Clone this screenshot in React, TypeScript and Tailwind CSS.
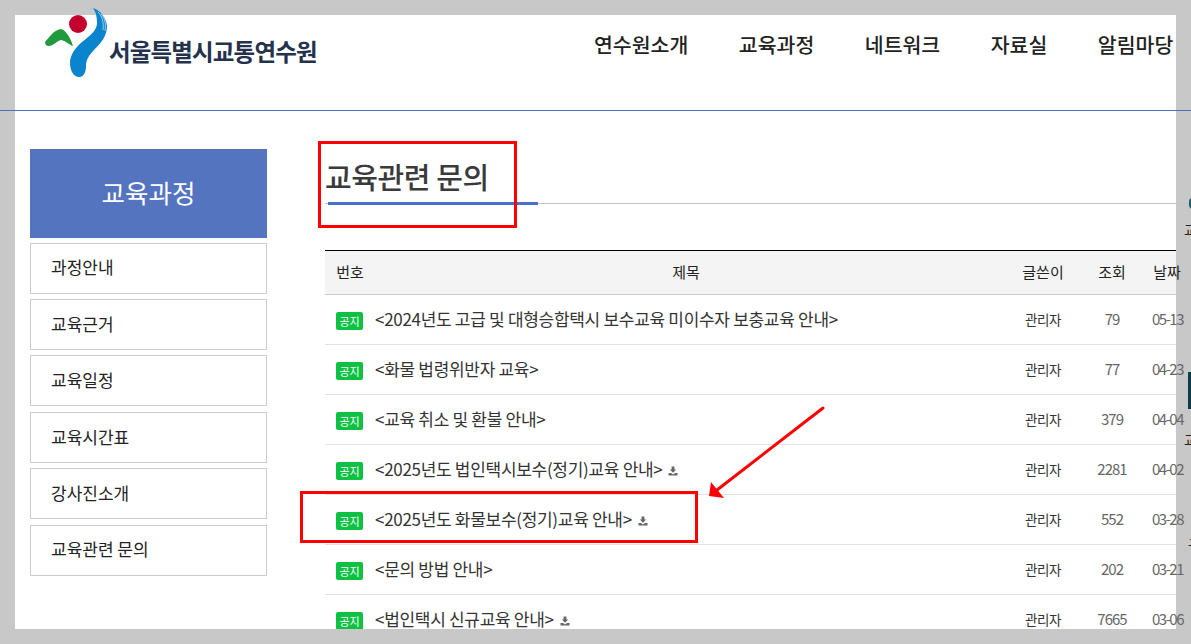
const menus = ["연수원소개", "교육과정", "네트워크", "자료실", "알림마당"];
const sideItems = ["과정안내", "교육근거", "교육일정", "교육시간표", "강사진소개", "교육관련 문의"];

const posts = [
  { title: "<2024년도 고급 및 대형승합택시 보수교육 미이수자 보충교육 안내>", views: 79, date: "05-13", file: false },
  { title: "<화물 법령위반자 교육>", views: 77, date: "04-23", file: false },
  { title: "<교육 취소 및 환불 안내>", views: 379, date: "04-04", file: false },
  { title: "<2025년도 법인택시보수(정기)교육 안내>", views: 2281, date: "04-02", file: true },
  { title: "<2025년도 화물보수(정기)교육 안내>", views: 552, date: "03-28", file: true },
  { title: "<문의 방법 안내>", views: 202, date: "03-21", file: false },
  { title: "<법인택시 신규교육 안내>", views: 7665, date: "03-06", file: true },
];

function Logo() {
  return (
    <svg width="66" height="72" viewBox="42 7 66 72" className="shrink-0">
      <circle cx="77" cy="24" r="9" fill="#c4002f" />
      <path d="M44 42 C48 38 52 30 60 29 C65 30 70 39 72 46 C67 44 63 40 60 40 C56 41 52 46 48 46 C45 46 44 44 44 42Z" fill="#1f9a3c" />
      <path d="M92 8 C99 10 105 17 106 26 C106 36 100 43 93 50 C88 55 85 60 85 66 C85 72 83 77 78 77 C73 77 69 71 69 63 C69 55 74 48 81 42 C90 35 96 30 96 23 C96 17 95 12 92 8Z" fill="#0a84cc" />
      <path d="M97 12 C101 16 103 22 102 30 M100 14 C104 18 105 24 104 31" fill="none" stroke="#ffffff" strokeWidth="0.6" />
    </svg>
  );
}

function DownloadIcon() {
  return (
    <svg width="10" height="10" viewBox="0 0 10 10" className="mt-[4px] ml-[6px] shrink-0">
      <path d="M3.6 0.5 H6.4 V3.5 H8.2 L5 6.8 L1.8 3.5 H3.6Z" fill="#666666" />
      <path d="M0.5 7 H3 L5 8.6 L7 7 H9.5 V9.5 H0.5Z" fill="#666666" />
    </svg>
  );
}

function App() {
  return (
    <div className="relative h-[644px] w-[1191px] overflow-hidden bg-[#c8c8c8] font-['Noto_Sans_CJK_KR',sans-serif]">
      {/* white sheet behind the page */}
      <div className="absolute left-[15px] top-[15px] h-[614px] w-[1161px] bg-white"></div>

      <header className="relative flex h-[111px] border-b border-[#4a6fc0] pl-[43px] pt-[7px]">
        <Logo />
        <strong className="mt-[26px] h-[36px] text-[23.5px] leading-[36px] font-bold tracking-[-0.85px] whitespace-nowrap text-[#25324d]">
          서울특별시교통연수원
        </strong>
        <nav className="absolute left-[594px] top-[28px] flex gap-[50.5px] text-[20.5px] leading-[32px] font-medium text-[#222]">
          {menus.map((menu) => (
            <a key={menu} className="whitespace-nowrap">
              {menu}
            </a>
          ))}
        </nav>
      </header>

      <div className="relative flex h-[518px] overflow-hidden pl-[30px] pt-[38px]">
        <aside className="w-[237px] shrink-0">
          <div className="flex h-[89px] items-center justify-center bg-[#5574c0] pb-[2px] text-[25.5px] text-white">
            교육과정
          </div>
          <ul className="mt-[4.6px] flex flex-col gap-[5.4px]">
            {sideItems.map((item) => (
              <li
                key={item}
                className="flex h-[51px] items-center border border-[#ccc] pb-[2px] pl-[20px] text-[17px] text-[#222]"
              >
                {item}
              </li>
            ))}
          </ul>
        </aside>

        <main className="ml-[58px] w-[851px] shrink-0">
          <div className="relative h-[55px] border-b border-[#c4c4c4] w-[866px]">
            <h2 className="pt-[6px] text-[29px] leading-[42px] font-medium tracking-[-0.4px] text-[#3a3a3a]">
              교육관련 문의
            </h2>
            <div className="absolute bottom-[-2px] left-[3px] h-[3px] w-[210px] bg-[#4a6fcf]"></div>
          </div>

          <div className="mt-[46px] border-t border-black">
            <div className="grid h-[44px] grid-cols-[50px_622px_92px_46px_64px] items-center border-b border-[#ccc] bg-[#f4f4f4] pb-[1px] text-center text-[15px] text-[#222]">
              <span>번호</span>
              <span>제목</span>
              <span>글쓴이</span>
              <span>조회</span>
              <span>날짜</span>
            </div>
            {posts.map((post) => (
              <div
                key={post.date}
                className="grid h-[50px] grid-cols-[50px_622px_92px_46px_64px] items-center border-b border-[#e2e2e2] text-center"
              >
                <span className="mt-[3px] ml-[11px] flex h-[18px] w-[27px] items-center justify-center rounded-[2px] bg-[#0dc143] text-[11px] text-white">
                  공지
                </span>
                <div className="flex items-center pb-[2px] text-left text-[17px] tracking-[-0.3px] whitespace-nowrap text-[#333]">
                  {post.title}
                  {post.file && <DownloadIcon />}
                </div>
                <span className="pb-[1px] text-[13.5px] tracking-[-0.4px] text-[#333]">관리자</span>
                <span className="pb-[1px] text-[15px] tracking-[-1px] text-[#666]">{post.views}</span>
                <span className="pb-[1px] pl-[1px] text-[15px] tracking-[-1.5px] text-[#666]">{post.date}</span>
              </div>
            ))}
          </div>
        </main>
      </div>

      {/* edge of the next window, cut off by the screenshot */}
      <div className="absolute left-[1189px] top-[198px] h-[11px] w-[4px] rounded-l-full bg-[#1d5a6e]"></div>
      <span className="absolute left-[1184px] top-[219px] text-[14px] leading-[20px] text-[#222]">교</span>
      <div className="absolute left-[1188px] top-[372px] h-[37px] w-[3px] bg-[#0d3b4c]"></div>
      <span className="absolute left-[1184px] top-[429px] text-[14px] leading-[20px] text-[#222]">교</span>
      <span className="absolute left-[1188px] top-[534px] text-[14px] leading-[20px] text-[#222]">구</span>

      {/* red marks drawn over the capture */}
      <div className="absolute left-[318px] top-[141px] h-[87px] w-[199px] border-[3px] border-[#ff0000]"></div>
      <div className="absolute left-[300px] top-[491px] h-[52px] w-[398px] border-[3px] border-[#ff0000]"></div>
      <svg className="absolute left-[700px] top-[400px]" width="130" height="105" viewBox="700 400 130 105">
        <line x1="823" y1="408" x2="717" y2="490" stroke="#ff0000" strokeWidth="3" strokeLinecap="round" />
        <polygon points="709,496 711,482 724,498" fill="#ff0000" />
      </svg>
    </div>
  );
}

export default App;
